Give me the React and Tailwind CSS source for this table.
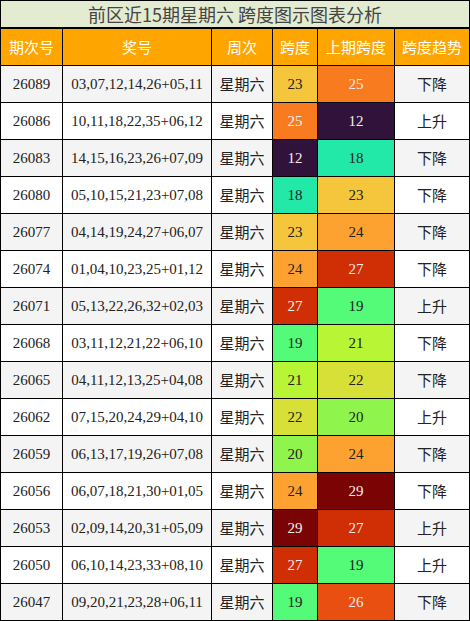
import React from 'react';

const rows = [
    ['26089', '03,07,12,14,26+05,11', 23, 25, '下降'],
    ['26086', '10,11,18,22,35+06,12', 25, 12, '上升'],
    ['26083', '14,15,16,23,26+07,09', 12, 18, '下降'],
    ['26080', '05,10,15,21,23+07,08', 18, 23, '下降'],
    ['26077', '04,14,19,24,27+06,07', 23, 24, '下降'],
    ['26074', '01,04,10,23,25+01,12', 24, 27, '下降'],
    ['26071', '05,13,22,26,32+02,03', 27, 19, '上升'],
    ['26068', '03,11,12,21,22+06,10', 19, 21, '下降'],
    ['26065', '04,11,12,13,25+04,08', 21, 22, '下降'],
    ['26062', '07,15,20,24,29+04,10', 22, 20, '上升'],
    ['26059', '06,13,17,19,26+07,08', 20, 24, '下降'],
    ['26056', '06,07,18,21,30+01,05', 24, 29, '下降'],
    ['26053', '02,09,14,20,31+05,09', 29, 27, '上升'],
    ['26050', '06,10,14,23,33+08,10', 27, 19, '上升'],
    ['26047', '09,20,21,23,28+06,11', 19, 26, '下降'],
];

// span value -> cell colour classes
const spanColors = {
    12: 'bg-[#30123b] text-[#eeeeee]',
    18: 'bg-[#23e9a8] text-[#222]',
    19: 'bg-[#53fb79] text-[#222]',
    20: 'bg-[#8ff44b] text-[#222]',
    21: 'bg-[#b7f535] text-[#222]',
    22: 'bg-[#d7e036] text-[#222]',
    23: 'bg-[#f5c63b] text-[#222]',
    24: 'bg-[#fda231] text-[#222]',
    25: 'bg-[#f87b20] text-[#eeeeee]',
    26: 'bg-[#e84f10] text-[#eeeeee]',
    27: 'bg-[#d02f05] text-[#eeeeee]',
    29: 'bg-[#7a0403] text-[#eeeeee]',
};

const headers = ['期次号', '奖号', '周次', '跨度', '上期跨度', '跨度趋势'];

const serif = "font-['Liberation_Serif','Noto_Sans_CJK_SC',serif]";
const sans = "font-['Noto_Sans_CJK_SC','Noto_Sans',sans-serif]";

export default function App() {
    return (
        <div className="w-[470px] bg-white">
            <div className={`h-[28px] border border-black bg-[#e3ebd1] flex items-center justify-center text-[18px] text-[#444] ${sans}`}>
                前区近15期星期六 跨度图示图表分析
            </div>
            <div className="grid grid-cols-[61px_148px_60px_44px_76px_74px] auto-rows-[36px] gap-px bg-black p-px">
                {headers.map((h) => (
                    <div key={h} className={`bg-[#ffa500] text-white text-[15px] flex items-center justify-center ${sans}`}>
                        {h}
                    </div>
                ))}
                {rows.map((r, i) => {
                    const bg = i % 2 === 0 ? 'bg-[#f4f4f4]' : 'bg-white';
                    return (
                        <React.Fragment key={r[0]}>
                            <div className={`${bg} ${serif} text-[15px] text-[#222] flex items-center justify-center`}>{r[0]}</div>
                            <div className={`${bg} ${serif} text-[15px] text-[#222] flex items-center justify-center`}>{r[1]}</div>
                            <div className={`${bg} ${sans} text-[15px] text-[#222] flex items-center justify-center`}>星期六</div>
                            <div className={`${spanColors[r[2]]} ${serif} text-[15px] flex items-center justify-center`}>{r[2]}</div>
                            <div className={`${spanColors[r[3]]} ${serif} text-[15px] flex items-center justify-center`}>{r[3]}</div>
                            <div className={`${bg} ${sans} text-[15px] text-[#222] flex items-center justify-center`}>{r[4]}</div>
                        </React.Fragment>
                    );
                })}
            </div>
        </div>
    );
}
